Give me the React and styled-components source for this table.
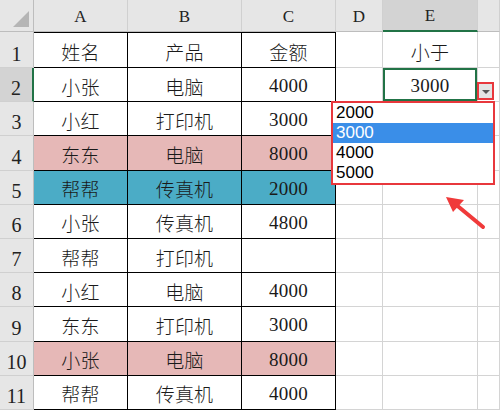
import { Fragment } from 'react'
import styled, { createGlobalStyle } from 'styled-components'

// Grundstil: ingen margin, fast størrelse
const GlobalStyle = createGlobalStyle`
  html, body {
    margin: 0;
    padding: 0;
    background: #ffffff;
  }
`

const Sheet = styled.div`
  position: relative;
  width: 500px;
  height: 412px;
  overflow: hidden;
  display: grid;
  grid-template-columns: 34px 94px 114px 94px 47px 95px 1fr;
  grid-template-rows: 32px 36px repeat(10, 34.2px) 1fr;
  font-family: "Liberation Serif", "Noto Sans CJK SC", serif;
  color: #1a1a1a;
`

// Hjørnet øverst til venstre med den grå trekanten
const Corner = styled.div`
  box-sizing: border-box;
  background: #e6e6e6;
  border-right: 1px solid #bdbdbd;
  border-bottom: 1px solid #bdbdbd;
  position: relative;

  &::after {
    content: '';
    position: absolute;
    right: 4px;
    bottom: 4px;
    width: 0;
    height: 0;
    border-left: 16px solid transparent;
    border-bottom: 16px solid #b5b5b5;
  }
`

const ColHeader = styled.div`
  box-sizing: border-box;
  background: ${({ $active }) => ($active ? '#d3d3d3' : '#e6e6e6')};
  border-right: 1px solid #d0d0d0;
  border-bottom: ${({ $active }) => ($active ? '2px solid #217346' : '1px solid #bdbdbd')};
  display: flex;
  align-items: center;
  justify-content: center;
  font-size: 17px;
  color: #222;
  padding-top: 2px;
`

const RowHeader = styled.div`
  box-sizing: border-box;
  background: ${({ $active }) => ($active ? '#d3d3d3' : '#e6e6e6')};
  border-right: ${({ $active }) => ($active ? '2px solid #217346' : '1px solid #bdbdbd')};
  border-bottom: 1px solid #d0d0d0;
  display: flex;
  align-items: flex-end;
  justify-content: center;
  font-size: 20px;
  color: #222;
  line-height: 1;
  padding-bottom: 3px;
`

const Cell = styled.div`
  box-sizing: border-box;
  background: ${({ $fill }) => $fill || '#ffffff'};
  border-right: 1px solid ${({ $table }) => ($table ? '#000000' : '#d4d4d4')};
  border-bottom: 1px solid ${({ $table }) => ($table ? '#000000' : '#d4d4d4')};
  box-shadow: ${({ $selected, $top }) =>
    $selected ? 'inset 0 0 0 2px #217346' : $top ? 'inset 0 1px 0 #000' : 'none'};
  display: flex;
  align-items: center;
  justify-content: center;
  font-size: 19px;
  font-weight: 300;
  padding-top: 3px;
  letter-spacing: 0.2px;
`

// Knappen med pilen ved siden av den valgte cellen
const DropButton = styled.div`
  position: absolute;
  left: 477px;
  top: 82px;
  width: 17px;
  height: 18px;
  box-sizing: border-box;
  border: 2px solid #e8373c;
  background: #e4e4e4;
  display: flex;
  align-items: center;
  justify-content: center;

  &::after {
    content: '';
    width: 0;
    height: 0;
    margin-top: 2px;
    border-left: 4px solid transparent;
    border-right: 4px solid transparent;
    border-top: 4px solid #555;
  }
`

// Rammen rundt nedtrekkslisten
const ListFrame = styled.div`
  position: absolute;
  left: 331px;
  top: 101px;
  width: 164px;
  box-sizing: border-box;
  border: 2px solid #e8373c;
  background: #ffffff;
`

const ListItem = styled.div`
  height: 20px;
  line-height: 20px;
  padding-left: 3px;
  font-family: "Liberation Sans", Arial, sans-serif;
  font-size: 17px;
  color: ${({ $active }) => ($active ? '#ffffff' : '#000000')};
  background: ${({ $active }) => ($active ? '#3a8ee8' : 'transparent')};
`

const Arrow = styled.svg`
  position: absolute;
  left: 436px;
  top: 188px;
`

const PINK = '#e6b8b7'
const TEAL = '#4bacc6'

const rows = [
  { cells: ['姓名', '产品', '金额'], extra: '小于' },
  { cells: ['小张', '电脑', '4000'], extra: '3000' },
  { cells: ['小红', '打印机', '3000'] },
  { cells: ['东东', '电脑', '8000'], fill: PINK },
  { cells: ['帮帮', '传真机', '2000'], fill: TEAL },
  { cells: ['小张', '传真机', '4800'] },
  { cells: ['帮帮', '打印机', ''] },
  { cells: ['小红', '电脑', '4000'] },
  { cells: ['东东', '打印机', '3000'] },
  { cells: ['小张', '电脑', '8000'], fill: PINK },
  { cells: ['帮帮', '传真机', '4000'] },
]

const columns = ['A', 'B', 'C', 'D', 'E', '']
const options = ['2000', '3000', '4000', '5000']

export default function App() {
  return (
    <>
      <GlobalStyle />
      <Sheet>
        <Corner />
        {columns.map((c, i) => (
          <ColHeader key={i} $active={c === 'E'}>{c}</ColHeader>
        ))}
        {rows.map((row, r) => (
          <Fragment key={r}>
            <RowHeader $active={r === 1}>{r + 1}</RowHeader>
            {row.cells.map((v, c) => (
              <Cell key={c} $table $fill={row.fill} $top={r === 0}>
                {v}
              </Cell>
            ))}
            <Cell />
            <Cell $selected={r === 1}>{row.extra}</Cell>
            <Cell />
          </Fragment>
        ))}
        <DropButton />
        <ListFrame>
          {options.map((o) => (
            <ListItem key={o} $active={o === '3000'}>{o}</ListItem>
          ))}
        </ListFrame>
        <Arrow width="56" height="44" viewBox="0 0 56 44">
          <line x1="47" y1="39" x2="18" y2="15" stroke="#f03a3a" strokeWidth="4" strokeLinecap="round" />
          <polygon points="10,9 28,12 17,24" fill="#f03a3a" />
        </Arrow>
      </Sheet>
    </>
  )
}
